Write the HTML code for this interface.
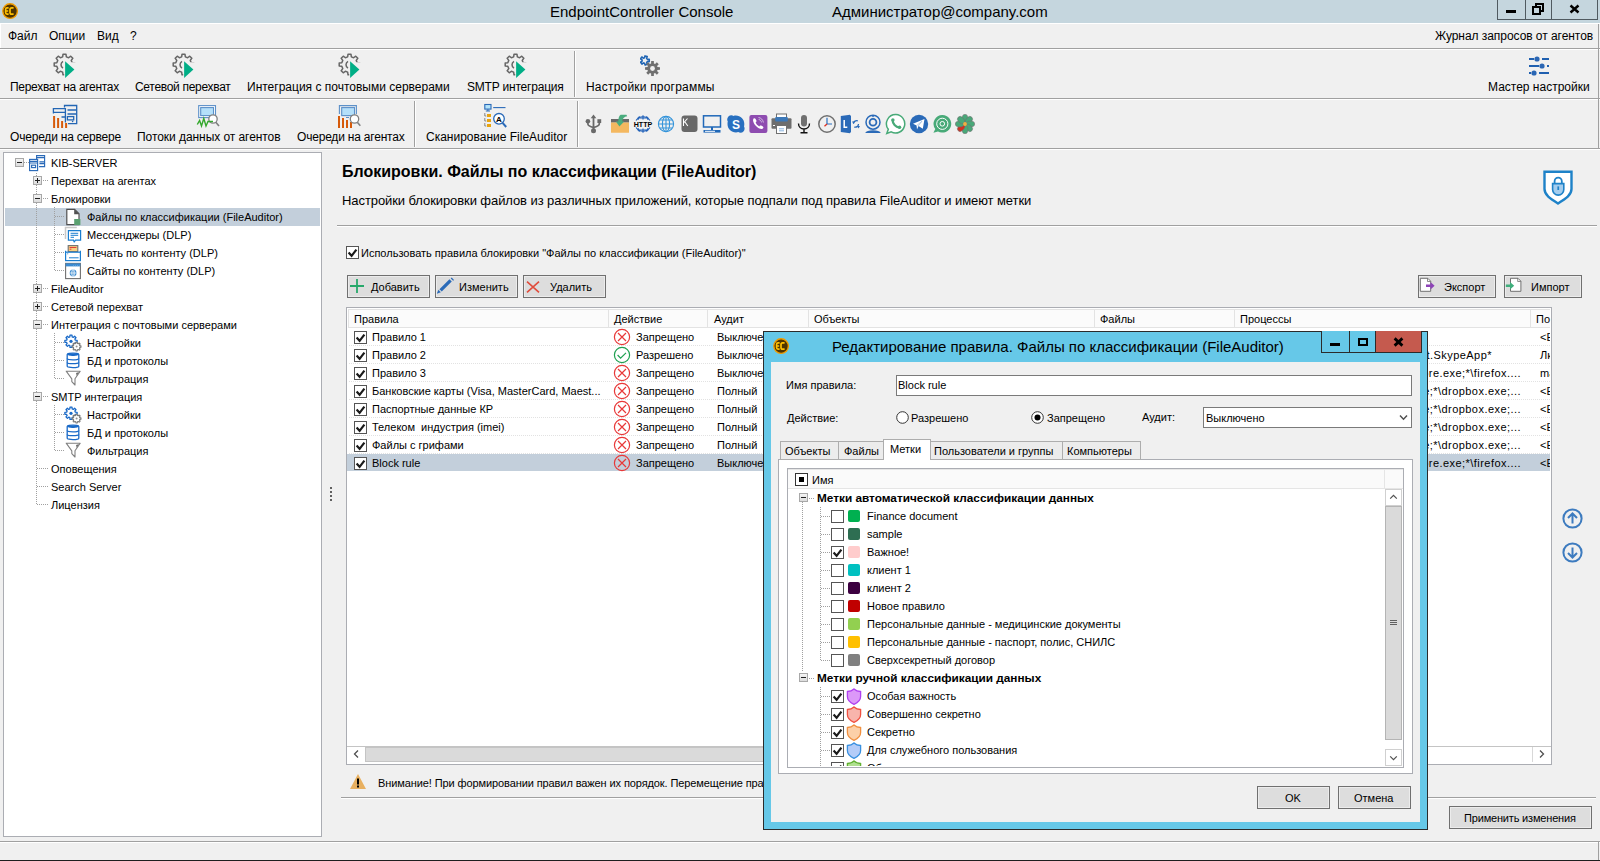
<!DOCTYPE html>
<html><head><meta charset="utf-8"><title>EndpointController Console</title>
<style>
html,body{margin:0;padding:0;width:1600px;height:861px;overflow:hidden;background:#f0f0f0;}
body{position:relative;font-family:"Liberation Sans",sans-serif;font-size:11px;color:#000;}
div,span,svg{position:absolute;box-sizing:border-box;}
.t{white-space:pre;}
</style></head><body>
<div style="left:0px;top:0px;width:1600px;height:23px;background:#c5d6de"></div>
<div style="left:0px;top:23px;width:1600px;height:1px;background:#ffffff"></div>
<svg style="left:2px;top:3px" width="17" height="17" viewBox="0 0 17 17"><circle cx="8.1" cy="8.1" r="7.3" fill="#4e3400" stroke="#f09c00" stroke-width="1.4"/><path d="M6.6 4.9H5Q3.6 4.9 3.6 6.4V9.6Q3.6 11.1 5 11.1H6.6M3.8 8H6.2M11.6 4.9H9.6Q8 4.9 8 6.6V9.4Q8 11.1 9.6 11.1H11.6" fill="none" stroke="#ffc000" stroke-width="1.7"/></svg>
<span class="t " style="left:550px;top:4px;font-size:15px;line-height:15px;">EndpointController Console</span>
<span class="t " style="left:832px;top:4px;font-size:15px;line-height:15px;">Администратор@company.com</span>
<div style="left:1497px;top:0px;width:101px;height:20px;border:1px solid #505a60;border-top:none;background:#c5d6de"></div>
<div style="left:1525px;top:0px;width:1px;height:20px;background:#505a60"></div>
<div style="left:1551px;top:0px;width:1px;height:20px;background:#505a60"></div>
<div style="left:1506px;top:10px;width:10px;height:3px;background:#000"></div>
<svg style="left:1532px;top:3px" width="13" height="12" viewBox="0 0 13 12"><rect x="1" y="4" width="7" height="7" fill="none" stroke="#000" stroke-width="2"/><path d="M4 3V1h7v7H9" fill="none" stroke="#000" stroke-width="2"/></svg>
<svg style="left:1569px;top:4px" width="11" height="10" viewBox="0 0 11 10"><path d="M1.5 1.5L9.5 8.5M9.5 1.5L1.5 8.5" stroke="#000" stroke-width="2.4"/></svg>
<div style="left:0px;top:24px;width:1px;height:24px;background:#ffffff"></div>
<span class="t " style="left:8px;top:30px;font-size:12px;line-height:12px;">Файл</span>
<span class="t " style="left:49px;top:30px;font-size:12px;line-height:12px;">Опции</span>
<span class="t " style="left:97px;top:30px;font-size:12px;line-height:12px;">Вид</span>
<span class="t " style="left:130px;top:30px;font-size:12px;line-height:12px;">?</span>
<span class="t " style="left:1435px;top:30px;font-size:12px;line-height:12px;letter-spacing:-0.05px;">Журнал запросов от агентов</span>
<div style="left:0px;top:48px;width:1600px;height:1px;background:#a0a0a0"></div>
<div style="left:0px;top:49px;width:1600px;height:1px;background:#ffffff"></div>
<span class="t " style="left:10px;top:81px;font-size:12px;line-height:12px;letter-spacing:-0.3px;">Перехват на агентах</span>
<span class="t " style="left:135px;top:81px;font-size:12px;line-height:12px;letter-spacing:-0.3px;">Сетевой перехват</span>
<span class="t " style="left:247px;top:81px;font-size:12px;line-height:12px;">Интеграция с почтовыми серверами</span>
<span class="t " style="left:467px;top:81px;font-size:12px;line-height:12px;letter-spacing:-0.2px;">SMTP интеграция</span>
<span class="t " style="left:586px;top:81px;font-size:12px;line-height:12px;letter-spacing:0.2px;">Настройки программы</span>
<span class="t " style="left:1488px;top:81px;font-size:12px;line-height:12px;">Мастер настройки</span>
<div style="left:574px;top:51px;width:1px;height:46px;background:#a0a0a0"></div>
<div style="left:575px;top:51px;width:1px;height:46px;background:#ffffff"></div>
<div style="left:0px;top:98px;width:1600px;height:1px;background:#a0a0a0"></div>
<div style="left:0px;top:99px;width:1600px;height:1px;background:#ffffff"></div>
<span class="t " style="left:10px;top:131px;font-size:12px;line-height:12px;letter-spacing:-0.2px;">Очереди на сервере</span>
<span class="t " style="left:137px;top:131px;font-size:12px;line-height:12px;letter-spacing:-0.06px;">Потоки данных от агентов</span>
<span class="t " style="left:297px;top:131px;font-size:12px;line-height:12px;letter-spacing:-0.2px;">Очереди на агентах</span>
<span class="t " style="left:426px;top:131px;font-size:12px;line-height:12px;">Сканирование FileAuditor</span>
<div style="left:414px;top:101px;width:1px;height:46px;background:#a0a0a0"></div>
<div style="left:415px;top:101px;width:1px;height:46px;background:#ffffff"></div>
<div style="left:577px;top:101px;width:1px;height:46px;background:#a0a0a0"></div>
<div style="left:578px;top:101px;width:1px;height:46px;background:#ffffff"></div>
<div style="left:0px;top:148px;width:1600px;height:1px;background:#a0a0a0"></div>
<div style="left:0px;top:149px;width:1600px;height:1px;background:#ffffff"></div>
<div style="left:1598px;top:24px;width:1px;height:125px;background:#a0a0a0"></div>
<div style="left:3px;top:152px;width:319px;height:685px;background:#fff;border:1px solid #abadb3"></div>
<div style="left:5px;top:208px;width:315px;height:18px;background:#c3cfdb"></div>
<div style="left:36px;top:173px;width:1px;height:332px;background:repeating-linear-gradient(to bottom,#a0a0a0 0 1px,transparent 1px 2px)"></div>
<div style="left:54px;top:207px;width:1px;height:64px;background:repeating-linear-gradient(to bottom,#a0a0a0 0 1px,transparent 1px 2px)"></div>
<div style="left:54px;top:333px;width:1px;height:46px;background:repeating-linear-gradient(to bottom,#a0a0a0 0 1px,transparent 1px 2px)"></div>
<div style="left:54px;top:405px;width:1px;height:46px;background:repeating-linear-gradient(to bottom,#a0a0a0 0 1px,transparent 1px 2px)"></div>
<div style="left:15px;top:158px;width:9px;height:9px;border:1px solid #a8a8a8;background:linear-gradient(#f4f4f4,#dcdcdc)"></div>
<div style="left:17px;top:162px;width:5px;height:1px;background:#202020"></div>
<div style="left:24px;top:162px;width:5px;height:1px;background:repeating-linear-gradient(to right,#a0a0a0 0 1px,transparent 1px 2px)"></div>
<span class="t " style="left:51px;top:158px;font-size:11px;line-height:11px;">KIB-SERVER</span>
<div style="left:33px;top:176px;width:9px;height:9px;border:1px solid #a8a8a8;background:linear-gradient(#f4f4f4,#dcdcdc)"></div>
<div style="left:35px;top:180px;width:5px;height:1px;background:#202020"></div>
<div style="left:37px;top:178px;width:1px;height:5px;background:#202020"></div>
<div style="left:43px;top:180px;width:5px;height:1px;background:repeating-linear-gradient(to right,#a0a0a0 0 1px,transparent 1px 2px)"></div>
<span class="t " style="left:51px;top:176px;font-size:11px;line-height:11px;">Перехват на агентах</span>
<div style="left:33px;top:194px;width:9px;height:9px;border:1px solid #a8a8a8;background:linear-gradient(#f4f4f4,#dcdcdc)"></div>
<div style="left:35px;top:198px;width:5px;height:1px;background:#202020"></div>
<div style="left:43px;top:198px;width:5px;height:1px;background:repeating-linear-gradient(to right,#a0a0a0 0 1px,transparent 1px 2px)"></div>
<span class="t " style="left:51px;top:194px;font-size:11px;line-height:11px;">Блокировки</span>
<div style="left:55px;top:216px;width:10px;height:1px;background:repeating-linear-gradient(to right,#a0a0a0 0 1px,transparent 1px 2px)"></div>
<span class="t " style="left:87px;top:212px;font-size:11px;line-height:11px;">Файлы по классификации (FileAuditor)</span>
<div style="left:55px;top:234px;width:10px;height:1px;background:repeating-linear-gradient(to right,#a0a0a0 0 1px,transparent 1px 2px)"></div>
<span class="t " style="left:87px;top:230px;font-size:11px;line-height:11px;">Мессенджеры (DLP)</span>
<div style="left:55px;top:252px;width:10px;height:1px;background:repeating-linear-gradient(to right,#a0a0a0 0 1px,transparent 1px 2px)"></div>
<span class="t " style="left:87px;top:248px;font-size:11px;line-height:11px;">Печать по контенту (DLP)</span>
<div style="left:55px;top:270px;width:10px;height:1px;background:repeating-linear-gradient(to right,#a0a0a0 0 1px,transparent 1px 2px)"></div>
<span class="t " style="left:87px;top:266px;font-size:11px;line-height:11px;">Сайты по контенту (DLP)</span>
<div style="left:33px;top:284px;width:9px;height:9px;border:1px solid #a8a8a8;background:linear-gradient(#f4f4f4,#dcdcdc)"></div>
<div style="left:35px;top:288px;width:5px;height:1px;background:#202020"></div>
<div style="left:37px;top:286px;width:1px;height:5px;background:#202020"></div>
<div style="left:43px;top:288px;width:5px;height:1px;background:repeating-linear-gradient(to right,#a0a0a0 0 1px,transparent 1px 2px)"></div>
<span class="t " style="left:51px;top:284px;font-size:11px;line-height:11px;">FileAuditor</span>
<div style="left:33px;top:302px;width:9px;height:9px;border:1px solid #a8a8a8;background:linear-gradient(#f4f4f4,#dcdcdc)"></div>
<div style="left:35px;top:306px;width:5px;height:1px;background:#202020"></div>
<div style="left:37px;top:304px;width:1px;height:5px;background:#202020"></div>
<div style="left:43px;top:306px;width:5px;height:1px;background:repeating-linear-gradient(to right,#a0a0a0 0 1px,transparent 1px 2px)"></div>
<span class="t " style="left:51px;top:302px;font-size:11px;line-height:11px;">Сетевой перехват</span>
<div style="left:33px;top:320px;width:9px;height:9px;border:1px solid #a8a8a8;background:linear-gradient(#f4f4f4,#dcdcdc)"></div>
<div style="left:35px;top:324px;width:5px;height:1px;background:#202020"></div>
<div style="left:43px;top:324px;width:5px;height:1px;background:repeating-linear-gradient(to right,#a0a0a0 0 1px,transparent 1px 2px)"></div>
<span class="t " style="left:51px;top:320px;font-size:11px;line-height:11px;">Интеграция с почтовыми серверами</span>
<div style="left:55px;top:342px;width:10px;height:1px;background:repeating-linear-gradient(to right,#a0a0a0 0 1px,transparent 1px 2px)"></div>
<span class="t " style="left:87px;top:338px;font-size:11px;line-height:11px;">Настройки</span>
<div style="left:55px;top:360px;width:10px;height:1px;background:repeating-linear-gradient(to right,#a0a0a0 0 1px,transparent 1px 2px)"></div>
<span class="t " style="left:87px;top:356px;font-size:11px;line-height:11px;">БД и протоколы</span>
<div style="left:55px;top:378px;width:10px;height:1px;background:repeating-linear-gradient(to right,#a0a0a0 0 1px,transparent 1px 2px)"></div>
<span class="t " style="left:87px;top:374px;font-size:11px;line-height:11px;">Фильтрация</span>
<div style="left:33px;top:392px;width:9px;height:9px;border:1px solid #a8a8a8;background:linear-gradient(#f4f4f4,#dcdcdc)"></div>
<div style="left:35px;top:396px;width:5px;height:1px;background:#202020"></div>
<div style="left:43px;top:396px;width:5px;height:1px;background:repeating-linear-gradient(to right,#a0a0a0 0 1px,transparent 1px 2px)"></div>
<span class="t " style="left:51px;top:392px;font-size:11px;line-height:11px;">SMTP интеграция</span>
<div style="left:55px;top:414px;width:10px;height:1px;background:repeating-linear-gradient(to right,#a0a0a0 0 1px,transparent 1px 2px)"></div>
<span class="t " style="left:87px;top:410px;font-size:11px;line-height:11px;">Настройки</span>
<div style="left:55px;top:432px;width:10px;height:1px;background:repeating-linear-gradient(to right,#a0a0a0 0 1px,transparent 1px 2px)"></div>
<span class="t " style="left:87px;top:428px;font-size:11px;line-height:11px;">БД и протоколы</span>
<div style="left:55px;top:450px;width:10px;height:1px;background:repeating-linear-gradient(to right,#a0a0a0 0 1px,transparent 1px 2px)"></div>
<span class="t " style="left:87px;top:446px;font-size:11px;line-height:11px;">Фильтрация</span>
<div style="left:37px;top:468px;width:11px;height:1px;background:repeating-linear-gradient(to right,#a0a0a0 0 1px,transparent 1px 2px)"></div>
<span class="t " style="left:51px;top:464px;font-size:11px;line-height:11px;">Оповещения</span>
<div style="left:37px;top:486px;width:11px;height:1px;background:repeating-linear-gradient(to right,#a0a0a0 0 1px,transparent 1px 2px)"></div>
<span class="t " style="left:51px;top:482px;font-size:11px;line-height:11px;">Search Server</span>
<div style="left:37px;top:504px;width:11px;height:1px;background:repeating-linear-gradient(to right,#a0a0a0 0 1px,transparent 1px 2px)"></div>
<span class="t " style="left:51px;top:500px;font-size:11px;line-height:11px;">Лицензия</span>
<span class="t " style="left:342px;top:164px;font-size:16px;line-height:16px;font-weight:bold;">Блокировки. Файлы по классификации (FileAuditor)</span>
<span class="t " style="left:342px;top:194px;font-size:13px;line-height:13px;letter-spacing:-0.08px;">Настройки блокировки файлов из различных приложений, которые подпали под правила FileAuditor и имеют метки</span>
<div style="left:337px;top:225px;width:1260px;height:1px;background:#a0a0a0"></div>
<div style="left:337px;top:226px;width:1260px;height:1px;background:#ffffff"></div>
<div style="left:330px;top:487px;width:2px;height:2px;background:#606060"></div>
<div style="left:330px;top:491px;width:2px;height:2px;background:#606060"></div>
<div style="left:330px;top:495px;width:2px;height:2px;background:#606060"></div>
<div style="left:330px;top:499px;width:2px;height:2px;background:#606060"></div>
<div style="left:346px;top:246px;width:13px;height:13px;background:#fff;border:1px solid #555"></div>
<svg style="left:346px;top:246px" width="13" height="13" viewBox="0 0 13 13"><path d="M2.6 6.6L5.6 9.8L10.4 3.6" fill="none" stroke="#1a1a1a" stroke-width="2.2"/></svg>
<span class="t " style="left:361px;top:248px;font-size:11px;line-height:11px;">Использовать правила блокировки &quot;Файлы по классификации (FileAuditor)&quot;</span>
<div style="left:347px;top:275px;width:83px;height:23px;background:#dddddd;border:1px solid #707070;box-shadow:inset 0 0 0 1px #ececec"></div>
<span class="t " style="left:371px;top:282px;font-size:11px;line-height:11px;">Добавить</span>
<div style="left:435px;top:275px;width:83px;height:23px;background:#dddddd;border:1px solid #707070;box-shadow:inset 0 0 0 1px #ececec"></div>
<span class="t " style="left:459px;top:282px;font-size:11px;line-height:11px;">Изменить</span>
<div style="left:523px;top:275px;width:83px;height:23px;background:#dddddd;border:1px solid #707070;box-shadow:inset 0 0 0 1px #ececec"></div>
<span class="t " style="left:550px;top:282px;font-size:11px;line-height:11px;">Удалить</span>
<div style="left:1418px;top:275px;width:78px;height:23px;background:#dddddd;border:1px solid #707070;box-shadow:inset 0 0 0 1px #ececec"></div>
<span class="t " style="left:1444px;top:282px;font-size:11px;line-height:11px;">Экспорт</span>
<div style="left:1504px;top:275px;width:78px;height:23px;background:#dddddd;border:1px solid #707070;box-shadow:inset 0 0 0 1px #ececec"></div>
<span class="t " style="left:1531px;top:282px;font-size:11px;line-height:11px;">Импорт</span>
<div style="left:346px;top:307px;width:1206px;height:458px;background:#fff;border:1px solid #abadb3"></div>
<div style="left:348px;top:309px;width:1202px;height:19px;background:#fbfbfb;border:1px solid #e3e3e3;border-right:none"></div>
<div style="left:608px;top:310px;width:1px;height:17px;background:#e3e3e3"></div>
<div style="left:707px;top:310px;width:1px;height:17px;background:#e3e3e3"></div>
<div style="left:808px;top:310px;width:1px;height:17px;background:#e3e3e3"></div>
<div style="left:1094px;top:310px;width:1px;height:17px;background:#e3e3e3"></div>
<div style="left:1234px;top:310px;width:1px;height:17px;background:#e3e3e3"></div>
<div style="left:1530px;top:310px;width:1px;height:17px;background:#e3e3e3"></div>
<span class="t " style="left:354px;top:314px;font-size:11px;line-height:11px;">Правила</span>
<span class="t " style="left:614px;top:314px;font-size:11px;line-height:11px;">Действие</span>
<span class="t " style="left:714px;top:314px;font-size:11px;line-height:11px;">Аудит</span>
<span class="t " style="left:814px;top:314px;font-size:11px;line-height:11px;">Объекты</span>
<span class="t " style="left:1100px;top:314px;font-size:11px;line-height:11px;">Файлы</span>
<span class="t " style="left:1240px;top:314px;font-size:11px;line-height:11px;">Процессы</span>
<span class="t " style="left:1536px;top:314px;font-size:11px;line-height:11px;">По</span>
<div style="left:349px;top:345px;width:1201px;height:1px;background:repeating-linear-gradient(to right,#e2e2e2 0 1px,transparent 1px 2px)"></div>
<div style="left:354px;top:331px;width:13px;height:13px;background:#fff;border:1px solid #555"></div>
<svg style="left:354px;top:331px" width="13" height="13" viewBox="0 0 13 13"><path d="M2.6 6.6L5.6 9.8L10.4 3.6" fill="none" stroke="#1a1a1a" stroke-width="2.2"/></svg>
<span class="t " style="left:372px;top:332px;font-size:11px;line-height:11px;">Правило 1</span>
<span class="t " style="left:636px;top:332px;font-size:11px;line-height:11px;">Запрещено</span>
<span class="t " style="left:717px;top:332px;font-size:11px;line-height:11px;">Выключено</span>
<div style="left:1539px;top:328px;width:11px;height:17px;overflow:hidden"><span class="t" style="left:1px;top:4px;font-size:11px;line-height:11px">&lt;E</span></div>
<div style="left:349px;top:363px;width:1201px;height:1px;background:repeating-linear-gradient(to right,#e2e2e2 0 1px,transparent 1px 2px)"></div>
<div style="left:354px;top:349px;width:13px;height:13px;background:#fff;border:1px solid #555"></div>
<svg style="left:354px;top:349px" width="13" height="13" viewBox="0 0 13 13"><path d="M2.6 6.6L5.6 9.8L10.4 3.6" fill="none" stroke="#1a1a1a" stroke-width="2.2"/></svg>
<span class="t " style="left:372px;top:350px;font-size:11px;line-height:11px;">Правило 2</span>
<span class="t " style="left:636px;top:350px;font-size:11px;line-height:11px;">Разрешено</span>
<span class="t " style="left:717px;top:350px;font-size:11px;line-height:11px;">Выключено</span>
<span class="t " style="left:1492px;top:350px;font-size:11px;line-height:11px;letter-spacing:0.45px;transform:translateX(-100%);">*Microsoft.SkypeApp*</span>
<div style="left:1539px;top:346px;width:11px;height:17px;overflow:hidden"><span class="t" style="left:1px;top:4px;font-size:11px;line-height:11px">Лк</span></div>
<div style="left:349px;top:381px;width:1201px;height:1px;background:repeating-linear-gradient(to right,#e2e2e2 0 1px,transparent 1px 2px)"></div>
<div style="left:354px;top:367px;width:13px;height:13px;background:#fff;border:1px solid #555"></div>
<svg style="left:354px;top:367px" width="13" height="13" viewBox="0 0 13 13"><path d="M2.6 6.6L5.6 9.8L10.4 3.6" fill="none" stroke="#1a1a1a" stroke-width="2.2"/></svg>
<span class="t " style="left:372px;top:368px;font-size:11px;line-height:11px;">Правило 3</span>
<span class="t " style="left:636px;top:368px;font-size:11px;line-height:11px;">Запрещено</span>
<span class="t " style="left:717px;top:368px;font-size:11px;line-height:11px;">Выключено</span>
<span class="t " style="left:1521px;top:368px;font-size:11px;line-height:11px;letter-spacing:0.45px;transform:translateX(-100%);">*\chrome.exe;*\iexplore.exe;*\firefox....</span>
<div style="left:1539px;top:364px;width:11px;height:17px;overflow:hidden"><span class="t" style="left:1px;top:4px;font-size:11px;line-height:11px">ma</span></div>
<div style="left:349px;top:399px;width:1201px;height:1px;background:repeating-linear-gradient(to right,#e2e2e2 0 1px,transparent 1px 2px)"></div>
<div style="left:354px;top:385px;width:13px;height:13px;background:#fff;border:1px solid #555"></div>
<svg style="left:354px;top:385px" width="13" height="13" viewBox="0 0 13 13"><path d="M2.6 6.6L5.6 9.8L10.4 3.6" fill="none" stroke="#1a1a1a" stroke-width="2.2"/></svg>
<span class="t " style="left:372px;top:386px;font-size:11px;line-height:11px;">Банковские карты (Visa, MasterCard, Maest...</span>
<span class="t " style="left:636px;top:386px;font-size:11px;line-height:11px;">Запрещено</span>
<span class="t " style="left:717px;top:386px;font-size:11px;line-height:11px;">Полный</span>
<span class="t " style="left:1521px;top:386px;font-size:11px;line-height:11px;letter-spacing:0.45px;transform:translateX(-100%);">*\skype.exe;*\dropbox.exe;...</span>
<div style="left:1539px;top:382px;width:11px;height:17px;overflow:hidden"><span class="t" style="left:1px;top:4px;font-size:11px;line-height:11px">&lt;E</span></div>
<div style="left:349px;top:417px;width:1201px;height:1px;background:repeating-linear-gradient(to right,#e2e2e2 0 1px,transparent 1px 2px)"></div>
<div style="left:354px;top:403px;width:13px;height:13px;background:#fff;border:1px solid #555"></div>
<svg style="left:354px;top:403px" width="13" height="13" viewBox="0 0 13 13"><path d="M2.6 6.6L5.6 9.8L10.4 3.6" fill="none" stroke="#1a1a1a" stroke-width="2.2"/></svg>
<span class="t " style="left:372px;top:404px;font-size:11px;line-height:11px;">Паспортные данные КР</span>
<span class="t " style="left:636px;top:404px;font-size:11px;line-height:11px;">Запрещено</span>
<span class="t " style="left:717px;top:404px;font-size:11px;line-height:11px;">Полный</span>
<span class="t " style="left:1521px;top:404px;font-size:11px;line-height:11px;letter-spacing:0.45px;transform:translateX(-100%);">*\skype.exe;*\dropbox.exe;...</span>
<div style="left:1539px;top:400px;width:11px;height:17px;overflow:hidden"><span class="t" style="left:1px;top:4px;font-size:11px;line-height:11px">&lt;E</span></div>
<div style="left:349px;top:435px;width:1201px;height:1px;background:repeating-linear-gradient(to right,#e2e2e2 0 1px,transparent 1px 2px)"></div>
<div style="left:354px;top:421px;width:13px;height:13px;background:#fff;border:1px solid #555"></div>
<svg style="left:354px;top:421px" width="13" height="13" viewBox="0 0 13 13"><path d="M2.6 6.6L5.6 9.8L10.4 3.6" fill="none" stroke="#1a1a1a" stroke-width="2.2"/></svg>
<span class="t " style="left:372px;top:422px;font-size:11px;line-height:11px;">Телеком  индустрия (imei)</span>
<span class="t " style="left:636px;top:422px;font-size:11px;line-height:11px;">Запрещено</span>
<span class="t " style="left:717px;top:422px;font-size:11px;line-height:11px;">Полный</span>
<span class="t " style="left:1521px;top:422px;font-size:11px;line-height:11px;letter-spacing:0.45px;transform:translateX(-100%);">*\skype.exe;*\dropbox.exe;...</span>
<div style="left:1539px;top:418px;width:11px;height:17px;overflow:hidden"><span class="t" style="left:1px;top:4px;font-size:11px;line-height:11px">&lt;E</span></div>
<div style="left:349px;top:453px;width:1201px;height:1px;background:repeating-linear-gradient(to right,#e2e2e2 0 1px,transparent 1px 2px)"></div>
<div style="left:354px;top:439px;width:13px;height:13px;background:#fff;border:1px solid #555"></div>
<svg style="left:354px;top:439px" width="13" height="13" viewBox="0 0 13 13"><path d="M2.6 6.6L5.6 9.8L10.4 3.6" fill="none" stroke="#1a1a1a" stroke-width="2.2"/></svg>
<span class="t " style="left:372px;top:440px;font-size:11px;line-height:11px;">Файлы с грифами</span>
<span class="t " style="left:636px;top:440px;font-size:11px;line-height:11px;">Запрещено</span>
<span class="t " style="left:717px;top:440px;font-size:11px;line-height:11px;">Полный</span>
<span class="t " style="left:1521px;top:440px;font-size:11px;line-height:11px;letter-spacing:0.45px;transform:translateX(-100%);">*\skype.exe;*\dropbox.exe;...</span>
<div style="left:1539px;top:436px;width:11px;height:17px;overflow:hidden"><span class="t" style="left:1px;top:4px;font-size:11px;line-height:11px">&lt;E</span></div>
<div style="left:347px;top:454px;width:1203px;height:17px;background:#c3cfdb"></div>
<div style="left:354px;top:457px;width:13px;height:13px;background:#fff;border:1px solid #555"></div>
<svg style="left:354px;top:457px" width="13" height="13" viewBox="0 0 13 13"><path d="M2.6 6.6L5.6 9.8L10.4 3.6" fill="none" stroke="#1a1a1a" stroke-width="2.2"/></svg>
<span class="t " style="left:372px;top:458px;font-size:11px;line-height:11px;">Block rule</span>
<span class="t " style="left:636px;top:458px;font-size:11px;line-height:11px;">Запрещено</span>
<span class="t " style="left:717px;top:458px;font-size:11px;line-height:11px;">Выключено</span>
<span class="t " style="left:1521px;top:458px;font-size:11px;line-height:11px;letter-spacing:0.45px;transform:translateX(-100%);">*\chrome.exe;*\iexplore.exe;*\firefox....</span>
<div style="left:1539px;top:454px;width:11px;height:17px;overflow:hidden"><span class="t" style="left:1px;top:4px;font-size:11px;line-height:11px">&lt;E</span></div>
<div style="left:347px;top:746px;width:1204px;height:17px;background:#fff;border-top:1px solid #c4c4c4"></div>
<div style="left:365px;top:747px;width:1000px;height:15px;background:#dadada;border:1px solid #c4c4c4"></div>
<div style="left:1532px;top:747px;width:18px;height:15px;background:#fff;border-left:1px solid #d8d8d8"></div>
<svg style="left:352px;top:749px" width="10" height="10" viewBox="0 0 10 10"><path d="M6 1.5L2.5 5L6 8.5" fill="none" stroke="#505050" stroke-width="1.3"/></svg>
<svg style="left:1536px;top:749px" width="10" height="10" viewBox="0 0 10 10"><path d="M4 1.5L7.5 5L4 8.5" fill="none" stroke="#505050" stroke-width="1.3"/></svg>
<svg style="left:349px;top:773px" width="18" height="17" viewBox="0 0 18 17"><path d="M9 1L17 16H1Z" fill="#e8b060"/><rect x="8" y="5.5" width="2" height="6" fill="#000"/><rect x="8" y="12.5" width="2" height="2" fill="#000"/></svg>
<span class="t " style="left:378px;top:778px;font-size:11px;line-height:11px;letter-spacing:-0.1px;">Внимание! При формировании правил важен их порядок. Перемещение правил</span>
<div style="left:341px;top:797px;width:1255px;height:1px;background:#a0a0a0"></div>
<div style="left:341px;top:798px;width:1255px;height:1px;background:#ffffff"></div>
<div style="left:1449px;top:806px;width:143px;height:23px;background:#dddddd;border:1px solid #707070;box-shadow:inset 0 0 0 1px #ececec"></div>
<span class="t " style="left:1464px;top:813px;font-size:11px;line-height:11px;letter-spacing:-0.18px;">Применить изменения</span>
<svg style="left:1562px;top:508px" width="21" height="21" viewBox="0 0 21 21"><circle cx="10.5" cy="10.5" r="9.1" fill="none" stroke="#3d7bbf" stroke-width="2"/><path d="M10.5 15.5V5.5M6 10L10.5 5.5L15 10" fill="none" stroke="#3d7bbf" stroke-width="2"/></svg>
<svg style="left:1562px;top:542px" width="21" height="21" viewBox="0 0 21 21"><circle cx="10.5" cy="10.5" r="9.1" fill="none" stroke="#3d7bbf" stroke-width="2"/><path d="M10.5 5.5V15.5M6 11L10.5 15.5L15 11" fill="none" stroke="#3d7bbf" stroke-width="2"/></svg>
<div style="left:0px;top:841px;width:1600px;height:1px;background:#a0a0a0"></div>
<div style="left:0px;top:842px;width:1600px;height:1px;background:#ffffff"></div>
<div style="left:0px;top:860px;width:1600px;height:1px;background:#1e1e1e"></div>
<div style="left:1598px;top:842px;width:1px;height:18px;background:#a0a0a0"></div>
<svg style="left:53px;top:53px" width="25" height="26" viewBox="0 0 25 26"><defs><clipPath id="gpc64"><path d="M0 0H11.2V26H0Z M11.2 0H25V9.2L11.2 9.2Z"/></clipPath></defs><path d="M9.66 3.82 L10.03 1.20 L12.97 1.20 L13.34 3.82 L15.63 4.76 L17.74 3.18 L19.82 5.26 L18.24 7.37 L19.18 9.66 L21.80 10.03 L21.80 12.97 L19.18 13.34 L18.24 15.63 L19.82 17.74 L17.74 19.82 L15.63 18.24 L13.34 19.18 L12.97 21.80 L10.03 21.80 L9.66 19.18 L7.37 18.24 L5.26 19.82 L3.18 17.74 L4.76 15.63 L3.82 13.34 L1.20 12.97 L1.20 10.03 L3.82 9.66 L4.76 7.37 L3.18 5.26 L5.26 3.18 L7.37 4.76Z" fill="none" stroke="#666" stroke-width="1.5" stroke-linejoin="round" clip-path="url(#gpc64)"/><path d="M10 8.4A3.9 3.9 0 0 0 10 15.2" fill="none" stroke="#666" stroke-width="1.5"/><path d="M12.1 8.2L21.4 16.5L12.1 24.9Z" fill="#00ae86"/></svg>
<svg style="left:172px;top:53px" width="25" height="26" viewBox="0 0 25 26"><defs><clipPath id="gpc183"><path d="M0 0H11.2V26H0Z M11.2 0H25V9.2L11.2 9.2Z"/></clipPath></defs><path d="M9.66 3.82 L10.03 1.20 L12.97 1.20 L13.34 3.82 L15.63 4.76 L17.74 3.18 L19.82 5.26 L18.24 7.37 L19.18 9.66 L21.80 10.03 L21.80 12.97 L19.18 13.34 L18.24 15.63 L19.82 17.74 L17.74 19.82 L15.63 18.24 L13.34 19.18 L12.97 21.80 L10.03 21.80 L9.66 19.18 L7.37 18.24 L5.26 19.82 L3.18 17.74 L4.76 15.63 L3.82 13.34 L1.20 12.97 L1.20 10.03 L3.82 9.66 L4.76 7.37 L3.18 5.26 L5.26 3.18 L7.37 4.76Z" fill="none" stroke="#666" stroke-width="1.5" stroke-linejoin="round" clip-path="url(#gpc183)"/><path d="M10 8.4A3.9 3.9 0 0 0 10 15.2" fill="none" stroke="#666" stroke-width="1.5"/><path d="M12.1 8.2L21.4 16.5L12.1 24.9Z" fill="#00ae86"/></svg>
<svg style="left:338px;top:53px" width="25" height="26" viewBox="0 0 25 26"><defs><clipPath id="gpc349"><path d="M0 0H11.2V26H0Z M11.2 0H25V9.2L11.2 9.2Z"/></clipPath></defs><path d="M9.66 3.82 L10.03 1.20 L12.97 1.20 L13.34 3.82 L15.63 4.76 L17.74 3.18 L19.82 5.26 L18.24 7.37 L19.18 9.66 L21.80 10.03 L21.80 12.97 L19.18 13.34 L18.24 15.63 L19.82 17.74 L17.74 19.82 L15.63 18.24 L13.34 19.18 L12.97 21.80 L10.03 21.80 L9.66 19.18 L7.37 18.24 L5.26 19.82 L3.18 17.74 L4.76 15.63 L3.82 13.34 L1.20 12.97 L1.20 10.03 L3.82 9.66 L4.76 7.37 L3.18 5.26 L5.26 3.18 L7.37 4.76Z" fill="none" stroke="#666" stroke-width="1.5" stroke-linejoin="round" clip-path="url(#gpc349)"/><path d="M10 8.4A3.9 3.9 0 0 0 10 15.2" fill="none" stroke="#666" stroke-width="1.5"/><path d="M12.1 8.2L21.4 16.5L12.1 24.9Z" fill="#00ae86"/></svg>
<svg style="left:504px;top:53px" width="25" height="26" viewBox="0 0 25 26"><defs><clipPath id="gpc515"><path d="M0 0H11.2V26H0Z M11.2 0H25V9.2L11.2 9.2Z"/></clipPath></defs><path d="M9.66 3.82 L10.03 1.20 L12.97 1.20 L13.34 3.82 L15.63 4.76 L17.74 3.18 L19.82 5.26 L18.24 7.37 L19.18 9.66 L21.80 10.03 L21.80 12.97 L19.18 13.34 L18.24 15.63 L19.82 17.74 L17.74 19.82 L15.63 18.24 L13.34 19.18 L12.97 21.80 L10.03 21.80 L9.66 19.18 L7.37 18.24 L5.26 19.82 L3.18 17.74 L4.76 15.63 L3.82 13.34 L1.20 12.97 L1.20 10.03 L3.82 9.66 L4.76 7.37 L3.18 5.26 L5.26 3.18 L7.37 4.76Z" fill="none" stroke="#666" stroke-width="1.5" stroke-linejoin="round" clip-path="url(#gpc515)"/><path d="M10 8.4A3.9 3.9 0 0 0 10 15.2" fill="none" stroke="#666" stroke-width="1.5"/><path d="M12.1 8.2L21.4 16.5L12.1 24.9Z" fill="#00ae86"/></svg>
<svg style="left:640px;top:54px" width="22" height="24" viewBox="0 0 22 24"><g transform="translate(4.8 6.5)"><path d="M-0.29 -2.79 L0.22 -4.59 L2.41 -3.92 L1.81 -2.14 L2.56 -1.13 L4.44 -1.21 L4.47 1.08 L2.59 1.06 L1.87 2.09 L2.52 3.85 L0.35 4.59 L-0.21 2.79 L-1.41 2.42 L-2.88 3.59 L-4.25 1.75 L-2.72 0.67 L-2.74 -0.59 L-4.30 -1.63 L-2.98 -3.50 L-1.47 -2.38Z" fill="none" stroke="#1e64b4" stroke-width="1.6" stroke-linejoin="round"/></g><g transform="translate(4.3 0)"><path d="M6.81 9.49 L6.86 7.02 L9.54 7.02 L9.59 9.49 L10.76 9.97 L12.55 8.26 L14.44 10.15 L12.73 11.94 L13.21 13.11 L15.68 13.16 L15.68 15.84 L13.21 15.89 L12.73 17.06 L14.44 18.85 L12.55 20.74 L10.76 19.03 L9.59 19.51 L9.54 21.98 L6.86 21.98 L6.81 19.51 L5.64 19.03 L3.85 20.74 L1.96 18.85 L3.67 17.06 L3.19 15.89 L0.72 15.84 L0.72 13.16 L3.19 13.11 L3.67 11.94 L1.96 10.15 L3.85 8.26 L5.64 9.97Z" fill="#707070"/><circle cx="8.2" cy="14.5" r="2.4" fill="#f0f0f0"/></g></svg>
<svg style="left:1528px;top:54px" width="23" height="24" viewBox="0 0 23 24"><g stroke="#2060b0" stroke-width="2" fill="#2a66b4"><path d="M1 5H6M14 5H21M1 12H11M19 12H21M1 19H3M11 19H21" fill="none"/><circle cx="9" cy="5" r="2.6" stroke="none"/><circle cx="14" cy="12" r="2.6" stroke="none"/><circle cx="6" cy="19" r="2.6" stroke="none"/></g></svg>
<svg style="left:52px;top:104px" width="27" height="26" viewBox="0 0 27 26"><g fill="none" stroke="#2366b4" stroke-width="1.3"><path d="M12.5 3.5V1.5H24.7V19.7H16"/><path d="M15.5 6H24.5M15.5 10H24.5"/><rect x="15.4" y="12.6" width="6.3" height="3.3"/><path d="M1.4 9.5V4.6H13.4V18.5"/><path d="M1.4 8.4H13.4M9.5 13H13.4"/></g><circle cx="20.6" cy="17.5" r="0.8" fill="#2366b4"/><g fill="#d65a0a"><rect x="1.1" y="12" width="2" height="12"/><rect x="5.1" y="14" width="2" height="10"/><rect x="9.1" y="17" width="2" height="7"/><rect x="13.1" y="19" width="2" height="5"/></g></svg>
<svg style="left:196px;top:104px" width="25" height="25" viewBox="0 0 25 25"><rect x="2.7" y="1.6" width="16.8" height="12" fill="#fff" stroke="#5c90c8" stroke-width="1.1"/><rect x="4.7" y="3.6" width="12.8" height="8" fill="#b4e0fa" stroke="#5c90c8" stroke-width="1.1"/><circle cx="17" cy="15" r="4.2" fill="#fff" stroke="#808080" stroke-width="1.3"/><path d="M19.8 18.2L23 22" stroke="#808080" stroke-width="1.6"/><path d="M1.3 20.5L3.6 16.5L5.5 22L7.8 14.5L10 22L12 17.5H17" fill="none" stroke="#34a82c" stroke-width="1.4"/></svg>
<svg style="left:337px;top:104px" width="25" height="25" viewBox="0 0 25 25"><path d="M2.4 10V1.6H19.4V10" fill="none" stroke="#5c90c8" stroke-width="1.1"/><rect x="4.7" y="3.6" width="12.8" height="8" fill="#b4e0fa" stroke="#5c90c8" stroke-width="1.1"/><rect x="9" y="13" width="3" height="1" fill="#5c90c8"/><g fill="#d65a0a"><rect x="1" y="12" width="2" height="12"/><rect x="5" y="14" width="2" height="10"/><rect x="9" y="16" width="2" height="8"/><rect x="13" y="18" width="2" height="6"/></g><circle cx="17.5" cy="15" r="4.2" fill="#fff" stroke="#808080" stroke-width="1.3"/><path d="M20.3 18.2L23.3 21.8" stroke="#808080" stroke-width="1.6"/></svg>
<svg style="left:483px;top:103px" width="25" height="26" viewBox="0 0 25 26"><rect x="1.8" y="1.5" width="6.2" height="4.6" fill="#b4e4fa" stroke="#2a6ab8" stroke-width="1.1"/><path d="M4.9 6.3V7.7M2.8 8H7" stroke="#2a6ab8" stroke-width="1.1"/><path d="M10.2 4.6H22.5" stroke="#2a6ab8" stroke-width="1.1"/><g stroke="#707070" stroke-width="0.8" fill="none"><path d="M1.8 10V13H3.3M1.8 15V18H3.3M1.8 20V23H3.3"/></g><g fill="#e8a410"><rect x="4" y="11" width="4" height="3"/><rect x="4" y="16" width="4" height="3"/><rect x="4" y="21" width="4" height="3"/></g><circle cx="16" cy="15.8" r="5.3" fill="#fff" stroke="#2a6ab8" stroke-width="1.3"/><path d="M19.6 19.8L23.2 24" stroke="#2a6ab8" stroke-width="2"/><text x="16" y="19" font-family="Liberation Sans" font-weight="bold" font-size="8" text-anchor="middle" fill="#000">A</text></svg>
<svg style="left:585px;top:114px" width="17" height="20" viewBox="0 0 17 20"><g fill="#6a6a6a"><path d="M8.5 0.6L11.3 4.2H5.7Z"/><rect x="7.6" y="3.5" width="1.8" height="12"/><circle cx="8.5" cy="16.8" r="2.5"/><circle cx="2.9" cy="7.2" r="2.3"/><rect x="12.4" y="5.2" width="3.8" height="3.8"/></g><path d="M2.9 8.5V10C2.9 11.6 4.6 12.4 8 13.4M14.3 8.5V10C14.3 11.6 12.4 12.4 9 13.4" fill="none" stroke="#6a6a6a" stroke-width="1.7"/></svg>
<svg style="left:610px;top:114px" width="20" height="20" viewBox="0 0 20 20"><rect x="1" y="5" width="18" height="3.6" fill="#6a6a6a"/><rect x="1" y="8.5" width="18" height="10.3" rx="0.6" fill="#f4b860"/><path d="M10.6 0.8H16.4L17.2 2.2C14.2 2.6 12.4 4.6 12.2 7.5H14.2L9.4 12.4L5.9 7.5H8.2C8.4 4.2 9 2 10.6 0.8Z" fill="#4aac7e"/></svg>
<svg style="left:633px;top:114px" width="20" height="20" viewBox="0 0 20 20"><g fill="none" stroke="#2060b8" stroke-width="1.1"><path d="M3 6.5A8.5 8.5 0 0 1 17 6.5M3 13.5A8.5 8.5 0 0 0 17 13.5"/><path d="M10 1.2V5.5M10 14.5V18.8M6.5 2.2C5.6 3.5 5.2 4.6 5 5.8M13.5 2.2C14.4 3.5 14.8 4.6 15 5.8M6.5 17.8C5.6 16.5 5.2 15.4 5 14.2M13.5 17.8C14.4 16.5 14.8 15.4 15 14.2M4.5 4H15.5M4.5 16H15.5"/></g><text x="10" y="13.3" font-family="Liberation Sans" font-weight="bold" font-size="7.6" text-anchor="middle" fill="#000" textLength="18.5" lengthAdjust="spacingAndGlyphs">HTTP</text></svg>
<svg style="left:657px;top:115px" width="18" height="18" viewBox="0 0 18 18"><g fill="none" stroke="#3494da" stroke-width="1.1"><circle cx="9" cy="9" r="7.6"/><ellipse cx="9" cy="9" rx="3.6" ry="7.6"/><path d="M9 1.4V16.6M1.4 9H16.6M2.6 5H15.4M2.6 13H15.4"/></g></svg>
<svg style="left:681px;top:115px" width="17" height="18" viewBox="0 0 17 18"><rect x="0.5" y="0.5" width="16" height="16.5" rx="3" fill="#686868"/><path d="M2.5 3.5V11M2.5 8L6.5 3.5M3.8 6.8L6.8 11" stroke="#fff" stroke-width="1.1" fill="none"/></svg>
<svg style="left:702px;top:114px" width="20" height="20" viewBox="0 0 20 20"><rect x="1.5" y="1.8" width="17" height="11.2" fill="none" stroke="#2068b8" stroke-width="1.5"/><rect x="9" y="13" width="2" height="3" fill="#2068b8"/><rect x="1.5" y="16" width="17" height="2.6" fill="#2068b8"/><rect x="3" y="16.8" width="10" height="1" fill="#fff"/></svg>
<svg style="left:726px;top:114px" width="19" height="20" viewBox="0 0 19 20"><path d="M5.5 1.2C3 1.2 1.2 3.2 1.2 5.5C1.2 6.3 1.4 7 1.8 7.6C1.6 8.3 1.5 9.1 1.5 9.9C1.5 14.8 5.2 18.4 10 18.4C10.8 18.4 11.6 18.3 12.3 18.1C12.9 18.5 13.7 18.8 14.5 18.8C16.9 18.8 18.6 17 18.6 14.6C18.6 13.8 18.4 13.1 18 12.5C18.2 11.7 18.3 10.9 18.3 10.1C18.3 5.2 14.6 1.6 9.8 1.6C9 1.6 8.3 1.7 7.5 1.9C6.9 1.4 6.2 1.2 5.5 1.2Z" fill="#2870c0"/><text x="10" y="14.6" font-family="Liberation Sans" font-weight="bold" font-size="12" text-anchor="middle" fill="#fff">S</text></svg>
<svg style="left:749px;top:114px" width="19" height="20" viewBox="0 0 19 20"><rect x="0.4" y="1" width="18" height="18" rx="2" fill="#8e4cb0"/><path d="M4.6 4.6C5.2 4 6 4.2 6.4 4.8L7.4 6.5C7.7 7 7.5 7.6 7.1 7.9L6.6 8.3C7.2 10 8.5 11.6 10.3 12.4L10.8 11.8C11.1 11.4 11.7 11.3 12.2 11.6L13.9 12.6C14.5 13 14.6 13.8 14 14.3L13.2 15C9.5 15.5 4.2 10.4 4 6Z" fill="#fff"/><path d="M9.5 3.5C12 3.8 14 5.8 14.4 8.5M9.7 5.5C11.2 5.8 12.3 6.9 12.5 8.4" stroke="#d8c8e8" stroke-width="0.9" fill="none"/></svg>
<svg style="left:771px;top:113px" width="21" height="22" viewBox="0 0 21 22"><rect x="5.5" y="1" width="10" height="5" fill="#fff" stroke="#707070" stroke-width="1"/><rect x="0.5" y="5.2" width="20" height="10.5" rx="1" fill="#6e6e6e"/><rect x="4.2" y="4" width="12.6" height="4.5" rx="1" fill="#3c78b8"/><rect x="5.5" y="12.5" width="10" height="8" fill="#fff" stroke="#707070" stroke-width="1"/><path d="M8 15.8H13M8 17.8H13" stroke="#6aa0d8" stroke-width="0.8"/><rect x="2" y="12" width="2" height="1" fill="#fff"/></svg>
<svg style="left:797px;top:114px" width="14" height="20" viewBox="0 0 14 20"><rect x="4" y="1" width="6" height="11.5" rx="3" fill="#707070"/><path d="M1.5 9.5C1.5 13 4 15 7 15C10 15 12.5 13 12.5 9.5M7 15V18.5M3.5 18.8H10.5" fill="none" stroke="#111" stroke-width="1.4"/></svg>
<svg style="left:817px;top:114px" width="20" height="20" viewBox="0 0 20 20"><circle cx="10" cy="10" r="8.2" fill="none" stroke="#707070" stroke-width="1.5"/><path d="M10 3.8V10H15" fill="none" stroke="#2a70c0" stroke-width="1.2"/><path d="M10 10L7.5 12.3" stroke="#e03020" stroke-width="1.3"/></svg>
<svg style="left:840px;top:114px" width="20" height="20" viewBox="0 0 20 20"><path d="M0.8 2L10 0.8V19.2L0.8 18Z" fill="#2a6ab8"/><rect x="10" y="1.5" width="1" height="17" fill="#2a6ab8"/><path d="M4.2 6V13.2H7.3" stroke="#fff" stroke-width="1.5" fill="none"/><path d="M13.5 9.5A3.2 3.2 0 0 1 17.8 6.8M18.5 10A3.2 3.2 0 0 1 14.2 13" fill="none" stroke="#2a6ab8" stroke-width="1.3"/><path d="M12 7.5L13.5 10L15 7.5ZM17 12L18.5 14.5L20 12Z" fill="#2a6ab8"/></svg>
<svg style="left:864px;top:114px" width="18" height="20" viewBox="0 0 18 20"><circle cx="9" cy="8.2" r="7" fill="none" stroke="#2a6ab8" stroke-width="1.5"/><circle cx="9" cy="8.2" r="3.4" fill="none" stroke="#2a6ab8" stroke-width="1.8"/><circle cx="9" cy="2.4" r="0.8" fill="#2a6ab8"/><path d="M1.2 19C2 17 5 16.2 9 16.2C13 16.2 16 17 16.8 19Z" fill="#2a6ab8"/></svg>
<svg style="left:885px;top:113px" width="22" height="22" viewBox="0 0 22 22"><path d="M11 1.6A9.2 9.2 0 1 1 6.2 18.9L1.8 20.5L3.3 16.3A9.2 9.2 0 0 1 11 1.6Z" fill="#fff" stroke="#48aa78" stroke-width="1.5"/><path d="M7.6 7.2C7.6 10.8 10.6 14.2 14.4 14.6" fill="none" stroke="#48aa78" stroke-width="2.2" stroke-linecap="round"/><circle cx="7.9" cy="6.9" r="1.7" fill="#48aa78"/><circle cx="14.6" cy="14.2" r="1.7" fill="#48aa78"/></svg>
<svg style="left:909px;top:114px" width="20" height="20" viewBox="0 0 20 20"><circle cx="10" cy="10" r="9.2" fill="#2a6ab8"/><path d="M4 9.8L15.5 5L13.8 14.8L9.5 12L8 15.5L7.6 11.6Z" fill="#fff"/><path d="M7.6 11.6L13 7.2L9.2 12" fill="none" stroke="#9bb8dc" stroke-width="0.7"/></svg>
<svg style="left:932px;top:114px" width="20" height="20" viewBox="0 0 20 20"><path d="M10.5 1A8.8 8.8 0 1 1 6 17.4L1.4 18.8L3.3 15A8.8 8.8 0 0 1 10.5 1Z" fill="#48aa78"/><circle cx="10.3" cy="9.8" r="5.6" fill="none" stroke="#fff" stroke-width="1"/><circle cx="10.3" cy="9.8" r="2.3" fill="#48aa78" stroke="#fff" stroke-width="1"/></svg>
<svg style="left:955px;top:114px" width="20" height="20" viewBox="0 0 20 20"><ellipse cx="10" cy="4.6" rx="2.9" ry="4.2" transform="rotate(0 10 10)" fill="#48a878" stroke="#707070" stroke-width="0.6"/><ellipse cx="10" cy="4.6" rx="2.9" ry="4.2" transform="rotate(45 10 10)" fill="#48a878" stroke="#707070" stroke-width="0.6"/><ellipse cx="10" cy="4.6" rx="2.9" ry="4.2" transform="rotate(90 10 10)" fill="#48a878" stroke="#707070" stroke-width="0.6"/><ellipse cx="10" cy="4.6" rx="2.9" ry="4.2" transform="rotate(135 10 10)" fill="#48a878" stroke="#707070" stroke-width="0.6"/><ellipse cx="10" cy="4.6" rx="2.9" ry="4.2" transform="rotate(180 10 10)" fill="#48a878" stroke="#707070" stroke-width="0.6"/><ellipse cx="10" cy="4.6" rx="2.9" ry="4.2" transform="rotate(225 10 10)" fill="#d03020" stroke="#707070" stroke-width="0.6"/><ellipse cx="10" cy="4.6" rx="2.9" ry="4.2" transform="rotate(270 10 10)" fill="#48a878" stroke="#707070" stroke-width="0.6"/><ellipse cx="10" cy="4.6" rx="2.9" ry="4.2" transform="rotate(315 10 10)" fill="#48a878" stroke="#707070" stroke-width="0.6"/><circle cx="10" cy="10" r="1.9" fill="#f0b040"/></svg>
<svg style="left:28px;top:154px" width="18" height="18" viewBox="0 0 18 18"><g fill="none" stroke="#2a6ab8" stroke-width="1.15"><path d="M8.6 5.2V1.6H16.6V12.6H11"/><path d="M8.6 3.6H16.6M11.4 7.8H16.6M11.4 9.6H16.6"/><rect x="1.6" y="5.4" width="8" height="11.2" fill="#fff"/><path d="M1.6 7.4H9.6M1.6 9H9.6"/><rect x="3.6" y="11.2" width="4" height="2.4"/></g></svg>
<svg style="left:65px;top:208px" width="17" height="18" viewBox="0 0 17 18"><path d="M1.8 1.4H9.6L14 5.8V16.6H1.8Z" fill="#fff" stroke="#505050" stroke-width="1.2"/><path d="M9.2 1.4V6.2H14Z" fill="#505050"/><rect x="9.2" y="11" width="6.2" height="6" fill="#5aa070"/></svg>
<svg style="left:64px;top:226px" width="18" height="18" viewBox="0 0 18 18"><path d="M1.5 13V1.6H12.8" fill="none" stroke="#c8c8c8" stroke-width="1.5"/><path d="M4.4 4.6H16.6V14.2H11.6L10.2 15.8L9.5 14.2H4.4Z" fill="#fff" stroke="#1a7ed0" stroke-width="1.2"/><path d="M6.6 7.3H14.2M6.6 9.3H14.2M6.6 11.3H10" stroke="#1a7ed0" stroke-width="1"/></svg>
<svg style="left:64px;top:244px" width="18" height="18" viewBox="0 0 18 18"><rect x="4.2" y="1.6" width="9.6" height="6" fill="#f8d080" stroke="#707070" stroke-width="1.1"/><path d="M5.6 3.5H12.4" stroke="#e03030" stroke-width="0.9"/><path d="M5.6 5.2H7.4" stroke="#e03030" stroke-width="0.9"/><rect x="1.6" y="8.2" width="14.8" height="8.4" fill="#fff" stroke="#1a7ed0" stroke-width="1.2"/><path d="M3.3 9.8H4.2M5 13.8H14.6" stroke="#1a7ed0" stroke-width="1"/><path d="M1.6 8.2V6.8M16.4 8.2V6.8" stroke="#1a7ed0" stroke-width="1.2"/></svg>
<svg style="left:64px;top:262px" width="18" height="18" viewBox="0 0 18 18"><rect x="1.6" y="1.4" width="14.8" height="15.2" fill="#fff" stroke="#707070" stroke-width="1.1"/><rect x="1.6" y="1.4" width="14.8" height="3" fill="#3a8ad0"/><path d="M9 4H15.5" stroke="#a0c8ec" stroke-width="0.8" stroke-dasharray="1 1"/><circle cx="9.1" cy="11" r="3.4" fill="#3a8ad0"/><path d="M5.7 11H12.5M9.1 7.6V14.4" stroke="#fff" stroke-width="0.7"/><ellipse cx="9.1" cy="11" rx="1.6" ry="3.4" fill="none" stroke="#fff" stroke-width="0.6"/></svg>
<svg style="left:63px;top:333px" width="20" height="20" viewBox="0 0 20 20"><g transform="translate(8 8.3)"><path d="M-1.15 -4.35 L-1.02 -6.12 L1.02 -6.12 L1.15 -4.35 L2.26 -3.89 L3.60 -5.04 L5.04 -3.60 L3.89 -2.26 L4.35 -1.15 L6.12 -1.02 L6.12 1.02 L4.35 1.15 L3.89 2.26 L5.04 3.60 L3.60 5.04 L2.26 3.89 L1.15 4.35 L1.02 6.12 L-1.02 6.12 L-1.15 4.35 L-2.26 3.89 L-3.60 5.04 L-5.04 3.60 L-3.89 2.26 L-4.35 1.15 L-6.12 1.02 L-6.12 -1.02 L-4.35 -1.15 L-3.89 -2.26 L-5.04 -3.60 L-3.60 -5.04 L-2.26 -3.89Z" fill="none" stroke="#1a6ac8" stroke-width="1.3" stroke-linejoin="round"/><circle cx="0" cy="0" r="1.6" fill="#1a6ac8"/></g><g transform="translate(13.6 13.6)"><path d="M3.20 -0.82 L4.35 -0.69 L4.35 0.69 L3.20 0.82 L2.84 1.68 L3.56 2.59 L2.59 3.56 L1.68 2.84 L0.82 3.20 L0.69 4.35 L-0.69 4.35 L-0.82 3.20 L-1.68 2.84 L-2.59 3.56 L-3.56 2.59 L-2.84 1.68 L-3.20 0.82 L-4.35 0.69 L-4.35 -0.69 L-3.20 -0.82 L-2.84 -1.68 L-3.56 -2.59 L-2.59 -3.56 L-1.68 -2.84 L-0.82 -3.20 L-0.69 -4.35 L0.69 -4.35 L0.82 -3.20 L1.68 -2.84 L2.59 -3.56 L3.56 -2.59 L2.84 -1.68Z" fill="#fff" stroke="#7a7a7a" stroke-width="1.1" stroke-linejoin="round"/><circle cx="0" cy="0" r="1" fill="#909090"/></g></svg>
<svg style="left:64px;top:351px" width="18" height="18" viewBox="0 0 18 18"><path d="M3.2 3.5C3.2 1.6 14.8 1.6 14.8 3.5V15.2C14.8 17 3.2 17 3.2 15.2Z" fill="#fff" stroke="#1a6ac8" stroke-width="1.3"/><path d="M3.2 3.5C3.2 5.4 14.8 5.4 14.8 3.5V2.5H3.2Z" fill="#1a6ac8"/><path d="M3.2 7.6C3.2 9.3 14.8 9.3 14.8 7.6M3.2 11.4C3.2 13.1 14.8 13.1 14.8 11.4" fill="none" stroke="#1a6ac8" stroke-width="1.3"/></svg>
<svg style="left:64px;top:369px" width="18" height="18" viewBox="0 0 18 18"><path d="M2.2 2.2H16.2L11 9.8V16L7.8 12.6V9.8Z" fill="#fff" stroke="#808080" stroke-width="1.1" stroke-linejoin="round"/><path d="M15 3L12.8 7L12 4Z" fill="#707070"/></svg>
<svg style="left:63px;top:405px" width="20" height="20" viewBox="0 0 20 20"><g transform="translate(8 8.3)"><path d="M-1.15 -4.35 L-1.02 -6.12 L1.02 -6.12 L1.15 -4.35 L2.26 -3.89 L3.60 -5.04 L5.04 -3.60 L3.89 -2.26 L4.35 -1.15 L6.12 -1.02 L6.12 1.02 L4.35 1.15 L3.89 2.26 L5.04 3.60 L3.60 5.04 L2.26 3.89 L1.15 4.35 L1.02 6.12 L-1.02 6.12 L-1.15 4.35 L-2.26 3.89 L-3.60 5.04 L-5.04 3.60 L-3.89 2.26 L-4.35 1.15 L-6.12 1.02 L-6.12 -1.02 L-4.35 -1.15 L-3.89 -2.26 L-5.04 -3.60 L-3.60 -5.04 L-2.26 -3.89Z" fill="none" stroke="#1a6ac8" stroke-width="1.3" stroke-linejoin="round"/><circle cx="0" cy="0" r="1.6" fill="#1a6ac8"/></g><g transform="translate(13.6 13.6)"><path d="M3.20 -0.82 L4.35 -0.69 L4.35 0.69 L3.20 0.82 L2.84 1.68 L3.56 2.59 L2.59 3.56 L1.68 2.84 L0.82 3.20 L0.69 4.35 L-0.69 4.35 L-0.82 3.20 L-1.68 2.84 L-2.59 3.56 L-3.56 2.59 L-2.84 1.68 L-3.20 0.82 L-4.35 0.69 L-4.35 -0.69 L-3.20 -0.82 L-2.84 -1.68 L-3.56 -2.59 L-2.59 -3.56 L-1.68 -2.84 L-0.82 -3.20 L-0.69 -4.35 L0.69 -4.35 L0.82 -3.20 L1.68 -2.84 L2.59 -3.56 L3.56 -2.59 L2.84 -1.68Z" fill="#fff" stroke="#7a7a7a" stroke-width="1.1" stroke-linejoin="round"/><circle cx="0" cy="0" r="1" fill="#909090"/></g></svg>
<svg style="left:64px;top:423px" width="18" height="18" viewBox="0 0 18 18"><path d="M3.2 3.5C3.2 1.6 14.8 1.6 14.8 3.5V15.2C14.8 17 3.2 17 3.2 15.2Z" fill="#fff" stroke="#1a6ac8" stroke-width="1.3"/><path d="M3.2 3.5C3.2 5.4 14.8 5.4 14.8 3.5V2.5H3.2Z" fill="#1a6ac8"/><path d="M3.2 7.6C3.2 9.3 14.8 9.3 14.8 7.6M3.2 11.4C3.2 13.1 14.8 13.1 14.8 11.4" fill="none" stroke="#1a6ac8" stroke-width="1.3"/></svg>
<svg style="left:64px;top:441px" width="18" height="18" viewBox="0 0 18 18"><path d="M2.2 2.2H16.2L11 9.8V16L7.8 12.6V9.8Z" fill="#fff" stroke="#808080" stroke-width="1.1" stroke-linejoin="round"/><path d="M15 3L12.8 7L12 4Z" fill="#707070"/></svg>
<svg style="left:1542px;top:169px" width="32" height="38" viewBox="0 0 32 38"><path d="M2.5 2.8H29.5V20C29.5 26 24 29.5 16 34.5C8 29.5 2.5 26 2.5 20Z" fill="#fff" stroke="#1e82c8" stroke-width="2.4" stroke-linejoin="miter"/><path d="M12.6 14V12.3A3.6 3.6 0 0 1 19.8 12.3V14" fill="none" stroke="#1e82c8" stroke-width="1.8"/><path d="M10.6 14.6H21.8V20.5A5.6 5.6 0 0 1 10.6 20.5Z" fill="#a4cdee" stroke="#1e82c8" stroke-width="1.6"/><rect x="15.4" y="17.4" width="1.7" height="3.6" fill="#1e82c8"/></svg>
<svg style="left:349px;top:278px" width="16" height="16" viewBox="0 0 16 16"><path d="M8 1V15M1 8H15" stroke="#26a86a" stroke-width="1.8"/></svg>
<svg style="left:435px;top:277px" width="20" height="19" viewBox="0 0 20 19"><path d="M5.6 13.4L15.6 3.4" stroke="#2a6ab8" stroke-width="3.2"/><path d="M16.2 1L18.6 3.4" stroke="#2a6ab8" stroke-width="1.3"/><path d="M1.8 16.8L3.4 12.8L5.8 15.2Z" fill="#2a6ab8"/></svg>
<svg style="left:526px;top:281px" width="14" height="12" viewBox="0 0 14 12"><path d="M1 0.6L13 11.4M13 0.6L1 11.4" stroke="#e04c3c" stroke-width="1.6"/></svg>
<svg style="left:1419px;top:277px" width="22" height="16" viewBox="0 0 22 16"><path d="M1.3 1.3H8.8L11.7 4.2V14.3H1.3Z" fill="#fff" stroke="#707070" stroke-width="1"/><path d="M8.5 1.3V4.5H11.7" fill="none" stroke="#707070" stroke-width="0.8"/><path d="M7 7.6H11.5V5L15.6 8.8L11.5 12.6V10H7Z" fill="#8e44b8"/></svg>
<svg style="left:1505px;top:277px" width="22" height="16" viewBox="0 0 22 16"><path d="M5.5 1.3H13L15.9 4.2V14.3H5.5Z" fill="#fff" stroke="#707070" stroke-width="1"/><path d="M12.7 1.3V4.5H15.9" fill="none" stroke="#707070" stroke-width="0.8"/><path d="M0.8 7.6H5V5L9.2 8.8L5 12.6V10H0.8Z" fill="#40ae7c"/></svg>
<svg style="left:613px;top:328px" width="18" height="18" viewBox="0 0 18 18"><circle cx="9" cy="9" r="7.6" fill="none" stroke="#e83838" stroke-width="1.2"/><path d="M5 5L13 13M13 5L5 13" stroke="#e83838" stroke-width="1.2"/></svg>
<svg style="left:613px;top:346px" width="18" height="18" viewBox="0 0 18 18"><circle cx="9" cy="9" r="7.6" fill="none" stroke="#1ea050" stroke-width="1.2"/><path d="M4.6 9L7.6 12.2L13 6.8" fill="none" stroke="#1ea050" stroke-width="1.2"/></svg>
<svg style="left:613px;top:364px" width="18" height="18" viewBox="0 0 18 18"><circle cx="9" cy="9" r="7.6" fill="none" stroke="#e83838" stroke-width="1.2"/><path d="M5 5L13 13M13 5L5 13" stroke="#e83838" stroke-width="1.2"/></svg>
<svg style="left:613px;top:382px" width="18" height="18" viewBox="0 0 18 18"><circle cx="9" cy="9" r="7.6" fill="none" stroke="#e83838" stroke-width="1.2"/><path d="M5 5L13 13M13 5L5 13" stroke="#e83838" stroke-width="1.2"/></svg>
<svg style="left:613px;top:400px" width="18" height="18" viewBox="0 0 18 18"><circle cx="9" cy="9" r="7.6" fill="none" stroke="#e83838" stroke-width="1.2"/><path d="M5 5L13 13M13 5L5 13" stroke="#e83838" stroke-width="1.2"/></svg>
<svg style="left:613px;top:418px" width="18" height="18" viewBox="0 0 18 18"><circle cx="9" cy="9" r="7.6" fill="none" stroke="#e83838" stroke-width="1.2"/><path d="M5 5L13 13M13 5L5 13" stroke="#e83838" stroke-width="1.2"/></svg>
<svg style="left:613px;top:436px" width="18" height="18" viewBox="0 0 18 18"><circle cx="9" cy="9" r="7.6" fill="none" stroke="#e83838" stroke-width="1.2"/><path d="M5 5L13 13M13 5L5 13" stroke="#e83838" stroke-width="1.2"/></svg>
<svg style="left:613px;top:454px" width="18" height="18" viewBox="0 0 18 18"><circle cx="9" cy="9" r="7.6" fill="none" stroke="#e83838" stroke-width="1.2"/><path d="M5 5L13 13M13 5L5 13" stroke="#e83838" stroke-width="1.2"/></svg>
<div style="left:763px;top:331px;width:665px;height:499px;background:#66c8e8;border:1px solid #2b2b2b"></div>
<div style="left:771px;top:362px;width:649px;height:460px;background:#f0f0f0"></div>
<svg style="left:773px;top:338px" width="17" height="17" viewBox="0 0 17 17"><circle cx="8.1" cy="8.1" r="7.3" fill="#4e3400" stroke="#f09c00" stroke-width="1.4"/><path d="M6.6 4.9H5Q3.6 4.9 3.6 6.4V9.6Q3.6 11.1 5 11.1H6.6M3.8 8H6.2M11.6 4.9H9.6Q8 4.9 8 6.6V9.4Q8 11.1 9.6 11.1H11.6" fill="none" stroke="#ffc000" stroke-width="1.7"/></svg>
<span class="t " style="left:832px;top:339px;font-size:15px;line-height:15px;">Редактирование правила. Файлы по классификации (FileAuditor)</span>
<div style="left:1321px;top:331px;width:101px;height:22px;border:1px solid #2b2b2b;border-top:none;background:#66c8e8"></div>
<div style="left:1349px;top:331px;width:1px;height:22px;background:#2b2b2b"></div>
<div style="left:1375px;top:331px;width:1px;height:22px;background:#2b2b2b"></div>
<div style="left:1376px;top:331px;width:45px;height:21px;background:#c55a4e"></div>
<div style="left:1330px;top:343px;width:10px;height:3px;background:#000"></div>
<div style="left:1358px;top:338px;width:10px;height:8px;border:2px solid #000"></div>
<svg style="left:1393px;top:337px" width="11" height="10" viewBox="0 0 11 10"><path d="M1.6 1.4L9.4 8.6M9.4 1.4L1.6 8.6" stroke="#000" stroke-width="2.8"/></svg>
<span class="t " style="left:786px;top:380px;font-size:11px;line-height:11px;">Имя правила:</span>
<div style="left:896px;top:375px;width:516px;height:21px;background:#fff;border:1px solid #7a7a7a"></div>
<span class="t " style="left:898px;top:380px;font-size:11px;line-height:11px;">Block rule</span>
<span class="t " style="left:787px;top:413px;font-size:11px;line-height:11px;">Действие:</span>
<svg style="left:896px;top:411px" width="13" height="13" viewBox="0 0 13 13"><circle cx="6.5" cy="6.5" r="5.8" fill="#fff" stroke="#333" stroke-width="1"/></svg>
<span class="t " style="left:911px;top:413px;font-size:11px;line-height:11px;">Разрешено</span>
<svg style="left:1031px;top:411px" width="13" height="13" viewBox="0 0 13 13"><circle cx="6.5" cy="6.5" r="5.8" fill="#fff" stroke="#333" stroke-width="1"/><circle cx="6.5" cy="6.5" r="3" fill="#000"/></svg>
<span class="t " style="left:1047px;top:413px;font-size:11px;line-height:11px;">Запрещено</span>
<span class="t " style="left:1142px;top:412px;font-size:11px;line-height:11px;">Аудит:</span>
<div style="left:1203px;top:407px;width:209px;height:21px;background:#fff;border:1px solid #7a7a7a"></div>
<span class="t " style="left:1206px;top:413px;font-size:11px;line-height:11px;">Выключено</span>
<svg style="left:1398px;top:413px" width="11" height="9" viewBox="0 0 11 9"><path d="M2 2.6L5.5 6.2L9 2.6" fill="none" stroke="#505050" stroke-width="1.5"/></svg>
<div style="left:778px;top:459px;width:635px;height:315px;background:#fff;border:1px solid #abadb3"></div>
<div style="left:780px;top:441px;width:59px;height:19px;background:#ececec;border:1px solid #adadad"></div>
<span class="t " style="left:785px;top:446px;font-size:11px;line-height:11px;">Объекты</span>
<div style="left:838px;top:441px;width:46px;height:19px;background:#ececec;border:1px solid #adadad"></div>
<span class="t " style="left:844px;top:446px;font-size:11px;line-height:11px;">Файлы</span>
<div style="left:930px;top:441px;width:133px;height:19px;background:#ececec;border:1px solid #adadad"></div>
<span class="t " style="left:934px;top:446px;font-size:11px;line-height:11px;">Пользователи и группы</span>
<div style="left:1062px;top:441px;width:79px;height:19px;background:#ececec;border:1px solid #adadad"></div>
<span class="t " style="left:1067px;top:446px;font-size:11px;line-height:11px;">Компьютеры</span>
<div style="left:883px;top:439px;width:48px;height:21px;background:#fff;border:1px solid #adadad;border-bottom:none"></div>
<span class="t " style="left:890px;top:444px;font-size:11px;line-height:11px;">Метки</span>
<div style="left:787px;top:468px;width:617px;height:300px;background:#fff;border:1px solid #abadb3"></div>
<div style="left:788px;top:469px;width:615px;height:19px;background:#fafafa;border-top:1px solid #e6e6e6"></div>
<div style="left:788px;top:488px;width:615px;height:1px;background:#e5e5e5"></div>
<div style="left:1384px;top:469px;width:1px;height:19px;background:#e5e5e5"></div>
<div style="left:795px;top:473px;width:13px;height:13px;background:#fff;border:1px solid #333"></div>
<div style="left:799px;top:477px;width:5px;height:5px;background:#000"></div>
<span class="t " style="left:812px;top:475px;font-size:11px;line-height:11px;">Имя</span>
<div style="left:1385px;top:489px;width:17px;height:278px;background:#fff"></div>
<div style="left:1385px;top:489px;width:17px;height:17px;background:#fff;border:1px solid #d0d0d0"></div>
<svg style="left:1388px;top:492px" width="11" height="10" viewBox="0 0 11 10"><path d="M2.2 6.6L5.5 3.3L8.8 6.6" fill="none" stroke="#505050" stroke-width="1.2"/></svg>
<div style="left:1385px;top:506px;width:17px;height:234px;background:#dadada;border:1px solid #b4b4b4"></div>
<div style="left:1390px;top:620px;width:7px;height:1px;background:#606060"></div>
<div style="left:1390px;top:622px;width:7px;height:1px;background:#606060"></div>
<div style="left:1390px;top:624px;width:7px;height:1px;background:#606060"></div>
<div style="left:1385px;top:749px;width:17px;height:17px;background:#fff;border:1px solid #d0d0d0"></div>
<svg style="left:1388px;top:753px" width="11" height="10" viewBox="0 0 11 10"><path d="M2.2 3.4L5.5 6.7L8.8 3.4" fill="none" stroke="#505050" stroke-width="1.2"/></svg>
<div style="left:788px;top:489px;width:597px;height:277px;overflow:hidden">
<div style="left:14px;top:13px;width:1px;height:170px;background:repeating-linear-gradient(to bottom,#a0a0a0 0 1px,transparent 1px 2px)"></div>
<div style="left:32px;top:18px;width:1px;height:153px;background:repeating-linear-gradient(to bottom,#a0a0a0 0 1px,transparent 1px 2px)"></div>
<div style="left:32px;top:198px;width:1px;height:90px;background:repeating-linear-gradient(to bottom,#a0a0a0 0 1px,transparent 1px 2px)"></div>
<div style="left:11px;top:4px;width:9px;height:9px;border:1px solid #a8a8a8;background:linear-gradient(#f4f4f4,#dcdcdc)"></div>
<div style="left:13px;top:8px;width:5px;height:1px;background:#202020"></div>
<div style="left:21px;top:9px;width:6px;height:1px;background:repeating-linear-gradient(to right,#a0a0a0 0 1px,transparent 1px 2px)"></div>
<span class="t " style="left:29px;top:4px;font-size:11.8px;line-height:11.8px;font-weight:bold;">Метки автоматической классификации данных</span>
<div style="left:33px;top:27px;width:9px;height:1px;background:repeating-linear-gradient(to right,#a0a0a0 0 1px,transparent 1px 2px)"></div>
<div style="left:43px;top:21px;width:13px;height:13px;background:#fff;border:1px solid #555"></div>
<div style="left:60px;top:21px;width:12px;height:12px;background:#00b050;border-radius:2px"></div>
<span class="t " style="left:79px;top:22px;font-size:11px;line-height:11px;">Finance document</span>
<div style="left:33px;top:45px;width:9px;height:1px;background:repeating-linear-gradient(to right,#a0a0a0 0 1px,transparent 1px 2px)"></div>
<div style="left:43px;top:39px;width:13px;height:13px;background:#fff;border:1px solid #555"></div>
<div style="left:60px;top:39px;width:12px;height:12px;background:#2e6e52;border-radius:2px"></div>
<span class="t " style="left:79px;top:40px;font-size:11px;line-height:11px;">sample</span>
<div style="left:33px;top:63px;width:9px;height:1px;background:repeating-linear-gradient(to right,#a0a0a0 0 1px,transparent 1px 2px)"></div>
<div style="left:43px;top:57px;width:13px;height:13px;background:#fff;border:1px solid #555"></div>
<svg style="left:43px;top:57px" width="13" height="13" viewBox="0 0 13 13"><path d="M2.6 6.6L5.6 9.8L10.4 3.6" fill="none" stroke="#1a1a1a" stroke-width="2.2"/></svg>
<div style="left:60px;top:57px;width:12px;height:12px;background:#ffcccc;border-radius:2px"></div>
<span class="t " style="left:79px;top:58px;font-size:11px;line-height:11px;">Важное!</span>
<div style="left:33px;top:81px;width:9px;height:1px;background:repeating-linear-gradient(to right,#a0a0a0 0 1px,transparent 1px 2px)"></div>
<div style="left:43px;top:75px;width:13px;height:13px;background:#fff;border:1px solid #555"></div>
<div style="left:60px;top:75px;width:12px;height:12px;background:#00c0c0;border-radius:2px"></div>
<span class="t " style="left:79px;top:76px;font-size:11px;line-height:11px;">клиент 1</span>
<div style="left:33px;top:99px;width:9px;height:1px;background:repeating-linear-gradient(to right,#a0a0a0 0 1px,transparent 1px 2px)"></div>
<div style="left:43px;top:93px;width:13px;height:13px;background:#fff;border:1px solid #555"></div>
<div style="left:60px;top:93px;width:12px;height:12px;background:#3c0040;border-radius:2px"></div>
<span class="t " style="left:79px;top:94px;font-size:11px;line-height:11px;">клиент 2</span>
<div style="left:33px;top:117px;width:9px;height:1px;background:repeating-linear-gradient(to right,#a0a0a0 0 1px,transparent 1px 2px)"></div>
<div style="left:43px;top:111px;width:13px;height:13px;background:#fff;border:1px solid #555"></div>
<div style="left:60px;top:111px;width:12px;height:12px;background:#c00000;border-radius:2px"></div>
<span class="t " style="left:79px;top:112px;font-size:11px;line-height:11px;">Новое правило</span>
<div style="left:33px;top:135px;width:9px;height:1px;background:repeating-linear-gradient(to right,#a0a0a0 0 1px,transparent 1px 2px)"></div>
<div style="left:43px;top:129px;width:13px;height:13px;background:#fff;border:1px solid #555"></div>
<div style="left:60px;top:129px;width:12px;height:12px;background:#92d050;border-radius:2px"></div>
<span class="t " style="left:79px;top:130px;font-size:11px;line-height:11px;">Персональные данные - медицинские документы</span>
<div style="left:33px;top:153px;width:9px;height:1px;background:repeating-linear-gradient(to right,#a0a0a0 0 1px,transparent 1px 2px)"></div>
<div style="left:43px;top:147px;width:13px;height:13px;background:#fff;border:1px solid #555"></div>
<div style="left:60px;top:147px;width:12px;height:12px;background:#ffc000;border-radius:2px"></div>
<span class="t " style="left:79px;top:148px;font-size:11px;line-height:11px;">Персональные данные - паспорт, полис, СНИЛС</span>
<div style="left:33px;top:171px;width:9px;height:1px;background:repeating-linear-gradient(to right,#a0a0a0 0 1px,transparent 1px 2px)"></div>
<div style="left:43px;top:165px;width:13px;height:13px;background:#fff;border:1px solid #555"></div>
<div style="left:60px;top:165px;width:12px;height:12px;background:#808080;border-radius:2px"></div>
<span class="t " style="left:79px;top:166px;font-size:11px;line-height:11px;">Сверхсекретный договор</span>
<div style="left:11px;top:184px;width:9px;height:9px;border:1px solid #a8a8a8;background:linear-gradient(#f4f4f4,#dcdcdc)"></div>
<div style="left:13px;top:188px;width:5px;height:1px;background:#202020"></div>
<div style="left:21px;top:189px;width:6px;height:1px;background:repeating-linear-gradient(to right,#a0a0a0 0 1px,transparent 1px 2px)"></div>
<span class="t " style="left:29px;top:184px;font-size:11.8px;line-height:11.8px;font-weight:bold;">Метки ручной классификации данных</span>
<div style="left:33px;top:207px;width:9px;height:1px;background:repeating-linear-gradient(to right,#a0a0a0 0 1px,transparent 1px 2px)"></div>
<div style="left:43px;top:201px;width:13px;height:13px;background:#fff;border:1px solid #555"></div>
<svg style="left:43px;top:201px" width="13" height="13" viewBox="0 0 13 13"><path d="M2.6 6.6L5.6 9.8L10.4 3.6" fill="none" stroke="#1a1a1a" stroke-width="2.2"/></svg>
<svg style="left:58px;top:199px" width="16" height="18" viewBox="0 0 16 18"><path d="M8 0.9Q10.6 3.3 14.6 3.5V8.6C14.6 12.2 11.8 14.8 8 16.4C4.2 14.8 1.4 12.2 1.4 8.6V3.5Q5.4 3.3 8 0.9Z" fill="#dc98f8" stroke="#b040f0" stroke-width="1.3"/></svg>
<span class="t " style="left:79px;top:202px;font-size:11px;line-height:11px;">Особая важность</span>
<div style="left:33px;top:225px;width:9px;height:1px;background:repeating-linear-gradient(to right,#a0a0a0 0 1px,transparent 1px 2px)"></div>
<div style="left:43px;top:219px;width:13px;height:13px;background:#fff;border:1px solid #555"></div>
<svg style="left:43px;top:219px" width="13" height="13" viewBox="0 0 13 13"><path d="M2.6 6.6L5.6 9.8L10.4 3.6" fill="none" stroke="#1a1a1a" stroke-width="2.2"/></svg>
<svg style="left:58px;top:217px" width="16" height="18" viewBox="0 0 16 18"><path d="M8 0.9Q10.6 3.3 14.6 3.5V8.6C14.6 12.2 11.8 14.8 8 16.4C4.2 14.8 1.4 12.2 1.4 8.6V3.5Q5.4 3.3 8 0.9Z" fill="#f8b4ac" stroke="#f05040" stroke-width="1.3"/></svg>
<span class="t " style="left:79px;top:220px;font-size:11px;line-height:11px;">Совершенно секретно</span>
<div style="left:33px;top:243px;width:9px;height:1px;background:repeating-linear-gradient(to right,#a0a0a0 0 1px,transparent 1px 2px)"></div>
<div style="left:43px;top:237px;width:13px;height:13px;background:#fff;border:1px solid #555"></div>
<svg style="left:43px;top:237px" width="13" height="13" viewBox="0 0 13 13"><path d="M2.6 6.6L5.6 9.8L10.4 3.6" fill="none" stroke="#1a1a1a" stroke-width="2.2"/></svg>
<svg style="left:58px;top:235px" width="16" height="18" viewBox="0 0 16 18"><path d="M8 0.9Q10.6 3.3 14.6 3.5V8.6C14.6 12.2 11.8 14.8 8 16.4C4.2 14.8 1.4 12.2 1.4 8.6V3.5Q5.4 3.3 8 0.9Z" fill="#fcd0a8" stroke="#f09040" stroke-width="1.3"/></svg>
<span class="t " style="left:79px;top:238px;font-size:11px;line-height:11px;">Секретно</span>
<div style="left:33px;top:261px;width:9px;height:1px;background:repeating-linear-gradient(to right,#a0a0a0 0 1px,transparent 1px 2px)"></div>
<div style="left:43px;top:255px;width:13px;height:13px;background:#fff;border:1px solid #555"></div>
<svg style="left:43px;top:255px" width="13" height="13" viewBox="0 0 13 13"><path d="M2.6 6.6L5.6 9.8L10.4 3.6" fill="none" stroke="#1a1a1a" stroke-width="2.2"/></svg>
<svg style="left:58px;top:253px" width="16" height="18" viewBox="0 0 16 18"><path d="M8 0.9Q10.6 3.3 14.6 3.5V8.6C14.6 12.2 11.8 14.8 8 16.4C4.2 14.8 1.4 12.2 1.4 8.6V3.5Q5.4 3.3 8 0.9Z" fill="#b4ccf8" stroke="#3890e0" stroke-width="1.3"/></svg>
<span class="t " style="left:79px;top:256px;font-size:11px;line-height:11px;">Для служебного пользования</span>
<div style="left:33px;top:279px;width:9px;height:1px;background:repeating-linear-gradient(to right,#a0a0a0 0 1px,transparent 1px 2px)"></div>
<div style="left:43px;top:273px;width:13px;height:13px;background:#fff;border:1px solid #555"></div>
<svg style="left:43px;top:273px" width="13" height="13" viewBox="0 0 13 13"><path d="M2.6 6.6L5.6 9.8L10.4 3.6" fill="none" stroke="#1a1a1a" stroke-width="2.2"/></svg>
<svg style="left:58px;top:271px" width="16" height="18" viewBox="0 0 16 18"><path d="M8 0.9Q10.6 3.3 14.6 3.5V8.6C14.6 12.2 11.8 14.8 8 16.4C4.2 14.8 1.4 12.2 1.4 8.6V3.5Q5.4 3.3 8 0.9Z" fill="#b0e090" stroke="#60b030" stroke-width="1.3"/></svg>
<span class="t " style="left:79px;top:274px;font-size:11px;line-height:11px;">Об</span>
</div>
<div style="left:1257px;top:786px;width:73px;height:23px;background:#dddddd;border:1px solid #707070;box-shadow:inset 0 0 0 1px #ececec"></div>
<span class="t " style="left:1285px;top:793px;font-size:11px;line-height:11px;">OK</span>
<div style="left:1338px;top:786px;width:73px;height:23px;background:#dddddd;border:1px solid #707070;box-shadow:inset 0 0 0 1px #ececec"></div>
<span class="t " style="left:1354px;top:793px;font-size:11px;line-height:11px;">Отмена</span>
</body></html>
